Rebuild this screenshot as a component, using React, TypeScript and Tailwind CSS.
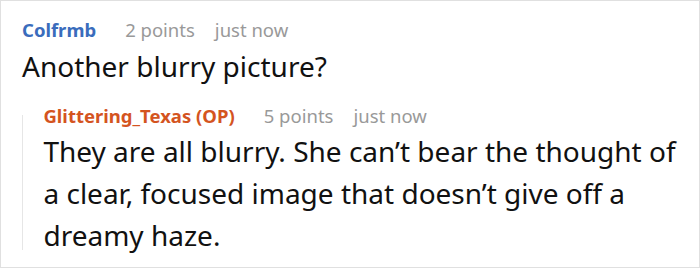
import React from "react";

interface CommentProps {
  author: string;
  authorClass: string;
  points: number;
  time: string;
  children: React.ReactNode;
}

const Comment: React.FC<CommentProps> = ({ author, authorClass, points, time, children }) => (
  <div>
    <div className="flex items-baseline text-[18.5px] leading-[24px]">
      <span className={`font-bold ${authorClass}`}>{author}</span>
      <span className="ml-[29px] text-[#999]">{points} points</span>
      <span className="ml-[20px] text-[#999]">{time}</span>
    </div>
    {children}
  </div>
);

export default function App() {
  return (
    <div
      className="w-[700px] h-[268px] border border-[#e0e0e0] bg-white text-[#111] overflow-hidden"
      style={{ fontFamily: '"Noto Sans", sans-serif' }}
    >
      <div className="pl-[21px] pr-[20px] pt-[17px]">
        <Comment author="Colfrmb" authorClass="text-[#3a6cbc]" points={2} time="just now">
          <p className="mt-[3px] text-[28px] leading-[43px]">Another blurry picture?</p>
        </Comment>
        <div className="mt-[16px] flex">
          <div className="mt-[11px] mb-[6px] w-px bg-[#e6e6e6]" />
          <div className="pl-[21px]">
            <Comment
              author="Glittering_Texas (OP)"
              authorClass="text-[#d4541f]"
              points={5}
              time="just now"
            >
              <p className="mt-[2px] text-[28px] leading-[42px]">
                They are all blurry. She can’t bear the thought of a clear, focused image that
                doesn’t give off a dreamy haze.
              </p>
            </Comment>
          </div>
        </div>
      </div>
    </div>
  );
}
